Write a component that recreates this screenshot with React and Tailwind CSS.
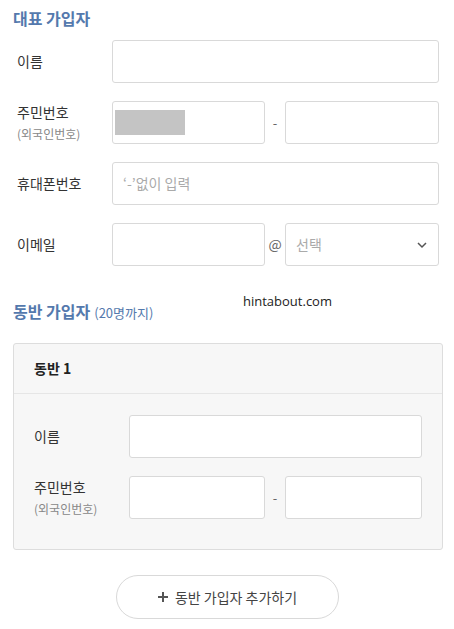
import React from 'react';

const font = { fontFamily: '"Noto Sans CJK KR", "Noto Sans", sans-serif' };

const Label = ({ children, sub }) => (
  <div className="flex flex-col justify-center leading-tight">
    <span className="text-[14px] text-[#333]">{children}</span>
    {sub && <span className="text-[12px] text-[#888] mt-[5px]">{sub}</span>}
  </div>
);

const Box = ({ className = '', children }) => (
  <div
    className={`h-[43px] border border-[#d9d9d9] rounded-[3px] bg-white flex items-center ${className}`}
  >
    {children}
  </div>
);

const Dash = () => (
  <div className="w-[20px] flex justify-center text-[13px] text-[#666]">-</div>
);

const Row = ({ children }) => (
  <div className="flex items-center h-[43px]">{children}</div>
);

const App = () => {
  return (
    <div className="relative w-[454px] h-[629px] bg-white overflow-hidden" style={font}>
      <div
        className="absolute left-[243px] top-[291px] text-[13px] leading-[20px] text-[#222]"
        style={{ fontFamily: '"Open Sans", sans-serif' }}
      >
        hintabout.com
      </div>
      <div className="pl-[13px] pr-[15px] pt-[6px]">
        <h2 className="text-[16px] font-bold text-[#5479ad] h-[24px] leading-[24px]">
          대표 가입자
        </h2>

        <div className="flex flex-col gap-[18px] mt-[10px]">
          <Row>
            <div className="w-[99px] pl-[4px]">
              <Label>이름</Label>
            </div>
            <Box className="w-[327px]" />
          </Row>

          <Row>
            <div className="w-[99px] pl-[4px]">
              <Label sub="(외국인번호)">주민번호</Label>
            </div>
            <Box className="w-[153px] bg-[#f6f6f6] px-[2px]">
              <div className="w-[70px] h-[25px] bg-[#c4c4c4]" />
            </Box>
            <Dash />
            <Box className="w-[154px]" />
          </Row>

          <Row>
            <div className="w-[99px] pl-[4px]">
              <Label>휴대폰번호</Label>
            </div>
            <Box className="w-[327px] px-[10px]">
              <span className="text-[14px] text-[#aaa]">‘-’없이 입력</span>
            </Box>
          </Row>

          <Row>
            <div className="w-[99px] pl-[4px]">
              <Label>이메일</Label>
            </div>
            <Box className="w-[153px]" />
            <div className="w-[20px] flex justify-center text-[14px] text-[#666]">@</div>
            <Box className="w-[154px] px-[10px] justify-between">
              <span className="text-[14px] text-[#aaa]">선택</span>
              <svg width="12" height="8" viewBox="0 0 12 8" fill="none">
                <path d="M2 2l4 4 4-4" stroke="#555" strokeWidth="1.5" />
              </svg>
            </Box>
          </Row>
        </div>

        <h2 className="mt-[33px] h-[24px] leading-[24px]">
          <span className="text-[16px] font-bold text-[#5479ad]">동반 가입자</span>
          <span className="text-[13px] text-[#5479ad] ml-[4px]">(20명까지)</span>
        </h2>

        <div className="mt-[20px] w-[430px] border border-[#ddd] rounded-[3px] bg-[#f7f7f7]">
          <div className="h-[50px] flex items-center px-[20px] border-b border-[#e6e6e6]">
            <span className="text-[14px] font-bold text-[#222]">동반 1</span>
          </div>
          <div className="flex flex-col gap-[18px] pt-[21px] pb-[30px]">
            <Row>
              <div className="w-[115px] pl-[20px]">
                <Label>이름</Label>
              </div>
              <Box className="w-[293px]" />
            </Row>
            <Row>
              <div className="w-[115px] pl-[20px]">
                <Label sub="(외국인번호)">주민번호</Label>
              </div>
              <Box className="w-[136px]" />
              <Dash />
              <Box className="w-[137px]" />
            </Row>
          </div>
        </div>

        <div className="flex justify-center mt-[25px] pl-[2px]">
          <button className="w-[223px] h-[44px] rounded-full border border-[#d9d9d9] bg-white flex items-center justify-center gap-[6px] text-[14px] text-[#444]">
            <svg width="12" height="12" viewBox="0 0 12 12">
              <path d="M6 1v10M1 6h10" stroke="#555" strokeWidth="2" />
            </svg>
            동반 가입자 추가하기
          </button>
        </div>
      </div>
    </div>
  );
};

export default App;
